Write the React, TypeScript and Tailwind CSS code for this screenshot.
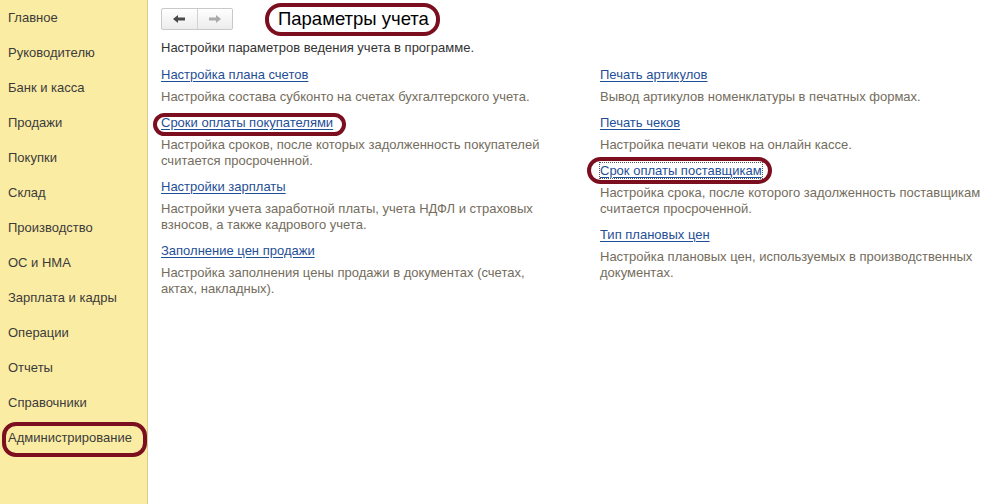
const sections = [
  "Главное",
  "Руководителю",
  "Банк и касса",
  "Продажи",
  "Покупки",
  "Склад",
  "Производство",
  "ОС и НМА",
  "Зарплата и кадры",
  "Операции",
  "Отчеты",
  "Справочники",
  "Администрирование",
];

type Item = { title: string; text: string[]; mark?: string; focus?: boolean };

const leftItems: Item[] = [
  { title: "Настройка плана счетов", text: ["Настройка состава субконто на счетах бухгалтерского учета."] },
  {
    title: "Сроки оплаты покупателями",
    text: ["Настройка сроков, после которых задолженность покупателей", "считается просроченной."],
    mark: "-left-[8px] -right-[13px] -top-[2px] -bottom-[5px]",
  },
  {
    title: "Настройки зарплаты",
    text: ["Настройки учета заработной платы, учета НДФЛ и страховых", "взносов, а также кадрового учета."],
  },
  {
    title: "Заполнение цен продажи",
    text: ["Настройка заполнения цены продажи в документах (счетах,", "актах, накладных)."],
  },
];

const rightItems: Item[] = [
  { title: "Печать артикулов", text: ["Вывод артикулов номенклатуры в печатных формах."] },
  { title: "Печать чеков", text: ["Настройка печати чеков на онлайн кассе."] },
  {
    title: "Срок оплаты поставщикам",
    text: ["Настройка срока, после которого задолженность поставщикам", "считается просроченной."],
    mark: "-left-[13px] -right-[10px] -top-[6px] -bottom-[5px]",
    focus: true,
  },
  {
    title: "Тип плановых цен",
    text: ["Настройка плановых цен, используемых в производственных", "документах."],
  },
];

// hand-drawn style oval over a piece of content
function Oval({ pos }: { pos: string }) {
  return (
    <span
      className={`pointer-events-none absolute rounded-[14px] border-[4px] border-[#7c0f1f] ${pos}`}
    />
  );
}

function Arrow({ dir, color }: { dir: "left" | "right"; color: string }) {
  return (
    <svg width="14" height="10" viewBox="0 0 14 10">
      {dir === "left" ? (
        <path d="M1 5 L6 1 L6 3.5 L13 3.5 L13 6.5 L6 6.5 L6 9 Z" fill={color} />
      ) : (
        <path d="M13 5 L8 1 L8 3.5 L1 3.5 L1 6.5 L8 6.5 L8 9 Z" fill={color} />
      )}
    </svg>
  );
}

function Setting({ item, first }: { item: Item; first?: boolean }) {
  return (
    <div className={first ? "" : "mt-[10px]"}>
      <div className="h-[16px] leading-[16px]">
        <span className="relative inline-block h-[16px] leading-[16px]">
          <a
            href="#"
            className={`text-[#1f4f96] underline underline-offset-[2px] decoration-[#1f4f96] ${
              item.focus ? "outline outline-1 outline-dotted outline-[#555]" : ""
            }`}
          >
            {item.title}
          </a>
          {item.mark && <Oval pos={item.mark} />}
        </span>
      </div>
      <div className="mt-[6px] text-[#746d5d] leading-[16px]">
        {item.text.map((t) => (
          <div key={t}>{t}</div>
        ))}
      </div>
    </div>
  );
}

export default function App() {
  return (
    <div
      className="flex h-[504px] w-[1000px] bg-white text-[13px] text-[#3b3b3b]"
      style={{ fontFamily: '"Liberation Sans", Arial, sans-serif' }}
    >
      {/* Sections panel */}
      <aside className="w-[148px] shrink-0 border-r border-[#d9cb8c] bg-[#fbeca3]">
        {sections.map((s) => (
          <div key={s} className="flex h-[35px] items-center pl-[8px]">
            <span className="relative inline-block h-[16px] leading-[16px]">
              {s}
              {s === "Администрирование" && (
                <Oval pos="-left-[6px] -right-[15px] -top-[8px] -bottom-[11px]" />
              )}
            </span>
          </div>
        ))}
      </aside>

      {/* Form */}
      <main className="flex-1 pl-[13px] pt-[8px]">
        <div className="flex h-[22px] items-center">
          <div className="flex h-[22px] w-[72px] overflow-hidden rounded-[2px] border border-[#c9c9c9] bg-gradient-to-b from-white to-[#ececec]">
            <button className="flex flex-1 items-center justify-center border-r border-[#d2d2d2]">
              <Arrow dir="left" color="#4a4a4a" />
            </button>
            <button className="flex flex-1 items-center justify-center">
              <Arrow dir="right" color="#ababab" />
            </button>
          </div>
          <h1 className="relative ml-[45px] h-[22px] text-[18.5px] leading-[22px] text-black">
            Параметры учета
            <Oval pos="-left-[13px] -right-[11px] -top-[5px] -bottom-[6px] rounded-[16px]" />
          </h1>
        </div>

        <p className="mt-[10px] leading-[16px] text-[#333]">
          Настройки параметров ведения учета в программе.
        </p>

        <div className="mt-[11px] grid grid-cols-[439px_1fr]">
          <div>
            {leftItems.map((it, i) => (
              <Setting key={it.title} item={it} first={i === 0} />
            ))}
          </div>
          <div>
            {rightItems.map((it, i) => (
              <Setting key={it.title} item={it} first={i === 0} />
            ))}
          </div>
        </div>
      </main>
    </div>
  );
}
